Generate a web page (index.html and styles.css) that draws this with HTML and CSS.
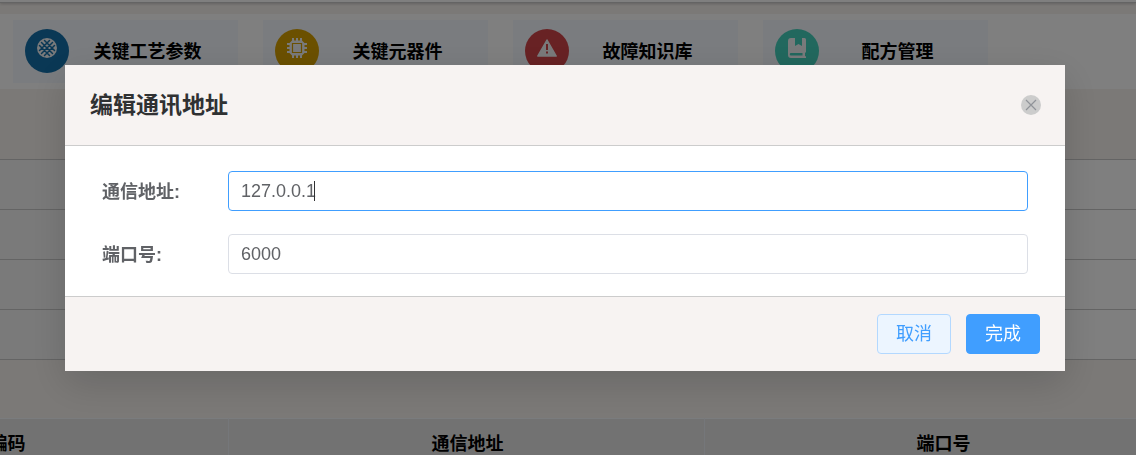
FILE: index.html
```html
<!DOCTYPE html>
<html lang="zh-CN">
<head>
<meta charset="utf-8">
<meta name="viewport" content="width=device-width, initial-scale=1">
<title>编辑通讯地址</title>
<link rel="stylesheet" href="styles.css">
</head>
<body>
<div class="page">
  <div class="topbar"></div>
  <nav class="shortcuts">
    <a class="card" href="#">
      <span class="badge badge-blue">
        <svg class="icon" viewBox="0 0 20 20"><circle cx="10" cy="10" r="10" fill="#f2f4f7"/><g stroke="#1470aa" stroke-width="1.5" stroke-linecap="round" fill="none"><path d="M4.5 4.5l11 11M15.500 4.500l-11 11M7.500 2.500L10 5l2.500-2.500M7.500 17.500L10 15l2.500 2.500M2.500 7.500L5 10l-2.500 2.500M17.500 7.500L15 10l2.500 2.500M10 5L5 10l5 5 5-5z"/></g></svg>
      </span>
      <span class="card-text">关键工艺参数</span>
    </a>
    <a class="card" href="#">
      <span class="badge badge-gold">
        <svg class="icon" viewBox="0 0 20 20"><path fill="#f2f4f7" d="M5 0h2v2.500h2V0h2v2.500h2V0h2v2.500l2.500 2.500H20v2h-2.500v2H20v2h-2.500v2H20v2h-2.500L15 17.500V20h-2v-2.500h-2V20H9v-2.500H7V20H5v-2.500L2.500 15H0v-2h2.500v-2H0V9h2.500V7H0V5h2.500L5 2.500z"/><path fill="none" stroke="#d6a000" stroke-width="1.200" d="M5.500 5.500h9v9h-9z"/></svg>
      </span>
      <span class="card-text">关键元器件</span>
    </a>
    <a class="card" href="#">
      <span class="badge badge-red">
        <svg class="icon" viewBox="0 0 20 20"><path fill="#f2f4f7" stroke="#f2f4f7" stroke-width="1.500" stroke-linejoin="round" d="M10 2l9.200 16H.8z"/><path fill="#d04448" d="M9 6h2v6H9zM9 13.500h2v2H9z"/></svg>
      </span>
      <span class="card-text">故障知识库</span>
    </a>
    <a class="card" href="#">
      <span class="badge badge-teal">
        <svg class="icon" viewBox="0 0 20 20"><path fill="#f2f4f7" fill-rule="evenodd" d="M4 0h4v8l3.500-2L15 8V0h2.500a1.500 1.500 0 0 1 1.500 1.500V14l-1 1v3l1 .500V20H4a3 3 0 0 1-3-3V3a3 3 0 0 1 3-3zM4 15a1 1 0 0 0 0 2.500h11.500V15z"/></svg>
      </span>
      <span class="card-text">配方管理</span>
    </a>
  </nav>
  <section class="info">
    <div class="info-row"></div>
    <div class="info-row"></div>
    <div class="info-row"></div>
    <div class="info-row"></div>
  </section>
  <table class="grid">
    <thead><tr><th class="code">编码</th><th>通信地址</th><th>端口号</th></tr></thead>
  </table>
</div>

<div class="mask">
  <form class="dialog" role="dialog" aria-labelledby="dialog-title">
    <header class="dialog-head">
      <h2 class="dialog-title" id="dialog-title">编辑通讯地址</h2>
      <button class="close" type="button" aria-label="关闭">
        <svg class="close-icon" viewBox="0 0 20 20"><path d="M5 5l10 10M15 5L5 15" fill="none" stroke="#909399" stroke-width="1.200"/></svg>
      </button>
    </header>
    <div class="dialog-body">
      <div class="field">
        <label class="label" for="address">通信地址:</label>
        <div class="control">
          <input class="input input-active" id="address" type="text" value="127.0.0.1">
          <span class="caret"></span>
        </div>
      </div>
      <div class="field">
        <label class="label" for="port">端口号:</label>
        <div class="control">
          <input class="input" id="port" type="text" value="6000">
        </div>
      </div>
    </div>
    <footer class="dialog-foot">
      <button class="btn btn-plain" type="button">取消</button>
      <button class="btn btn-primary" type="submit">完成</button>
    </footer>
  </form>
</div>
</body>
</html>
```
FILE: styles.css
```css
* {
  box-sizing: border-box;
}

body {
  margin: 0;
  background: #f7f3ef;
  color: #000;
  font-family: "Liberation Sans", "Noto Sans CJK SC", sans-serif;
  font-size: 18px;
}

.page {
  height: 100vh;
  overflow: hidden;
}

.topbar {
  height: 3px;
  background: #fff;
  border-bottom: 1px solid #c8c8c8;
  box-shadow: 0 1px 3px rgba(0, 0, 0, 0.2);
}

.shortcuts {
  display: flex;
  gap: 25px;
  margin-top: 11px;
  padding: 6px 13px;
  background: #fff;
}

.card {
  display: flex;
  align-items: center;
  width: 225px;
  height: 63px;
  padding: 0 12px 2px;
  background: #f4f8fe;
  color: #000;
  text-decoration: none;
}

.badge {
  display: flex;
  justify-content: center;
  flex: none;
  width: 44px;
  height: 44px;
  padding-top: 9px;
  border-radius: 50%;
}

.badge-blue {
  background: #1470aa;
}

.badge-gold {
  background: #d6a000;
}

.badge-red {
  background: #d04448;
}

.badge-teal {
  background: #44d0bc;
}

.icon {
  width: 20px;
  height: 20px;
}

.card-text {
  flex: 1;
  padding-bottom: 2px;
  font-weight: 700;
  text-align: center;
  white-space: nowrap;
}

.info {
  margin-top: 70px;
  border-top: 1px solid #c8c8c8;
  background: linear-gradient(90deg, #f4f4f4 50%, #fff 50%);
}

.info-row {
  height: 50px;
  border-bottom: 1px solid #c8c8c8;
}

.grid {
  width: calc(100% + 292px);
  margin: 58px 0 0 -247px;
  border-collapse: separate;
  border-spacing: 0;
  table-layout: fixed;
}

.grid th {
  height: 48px;
  padding: 0 0 2px 2px;
  border-top: 1px solid #f4f8fc;
  border-right: 1px solid #ebeef5;
  background: #e4e4e4;
}

.grid .code {
  padding-left: 34px;
}

.mask {
  position: fixed;
  inset: 0;
  padding: 65px 71px 0 65px;
  background: rgba(0, 0, 0, 0.5);
}

.dialog {
  background: #fff;
  box-shadow: 0 12px 36px rgba(0, 0, 0, 0.15);
}

.dialog-head {
  display: flex;
  align-items: center;
  justify-content: space-between;
  height: 81px;
  padding: 0 24px 0 25px;
  border-bottom: 1px solid #ccc;
  background: #f7f3f2;
}

.dialog-title {
  margin: 0;
  color: #303133;
  font-size: 23px;
  line-height: 32px;
}

.close {
  display: flex;
  width: 20px;
  height: 20px;
  padding: 0;
  border: 0;
  border-radius: 50%;
  background: #ccc;
}

.close-icon {
  width: 20px;
  height: 20px;
}

.dialog-body {
  display: flex;
  flex-direction: column;
  gap: 23px;
  padding: 25px 37px 22px;
}

.field {
  display: flex;
  align-items: center;
}

.label {
  flex: none;
  width: 126px;
  padding-bottom: 2px;
  color: #606266;
  font-weight: 700;
}

.control {
  position: relative;
  flex: 1;
}

.input {
  display: block;
  width: 100%;
  height: 40px;
  padding: 0 12px;
  border: 1px solid #dcdfe6;
  border-radius: 4px;
  outline: 0;
  background: #fff;
  color: #606266;
  font: inherit;
}

.input-active {
  border-color: #409eff;
}

.caret {
  position: absolute;
  top: 10px;
  left: 86px;
  width: 1px;
  height: 20px;
  background: #303133;
}

.dialog-foot {
  display: flex;
  justify-content: flex-end;
  gap: 15px;
  padding: 17px 25px;
  border-top: 1px solid #ccc;
  background: #f7f3f2;
}

.btn {
  height: 40px;
  padding: 0 18px 4px;
  border: 1px solid;
  border-radius: 4px;
  font: inherit;
}

.btn-plain {
  border-color: #b3d8ff;
  background: #ecf5ff;
  color: #409eff;
}

.btn-primary {
  border-color: #409eff;
  background: #409eff;
  color: #fff;
}
```
